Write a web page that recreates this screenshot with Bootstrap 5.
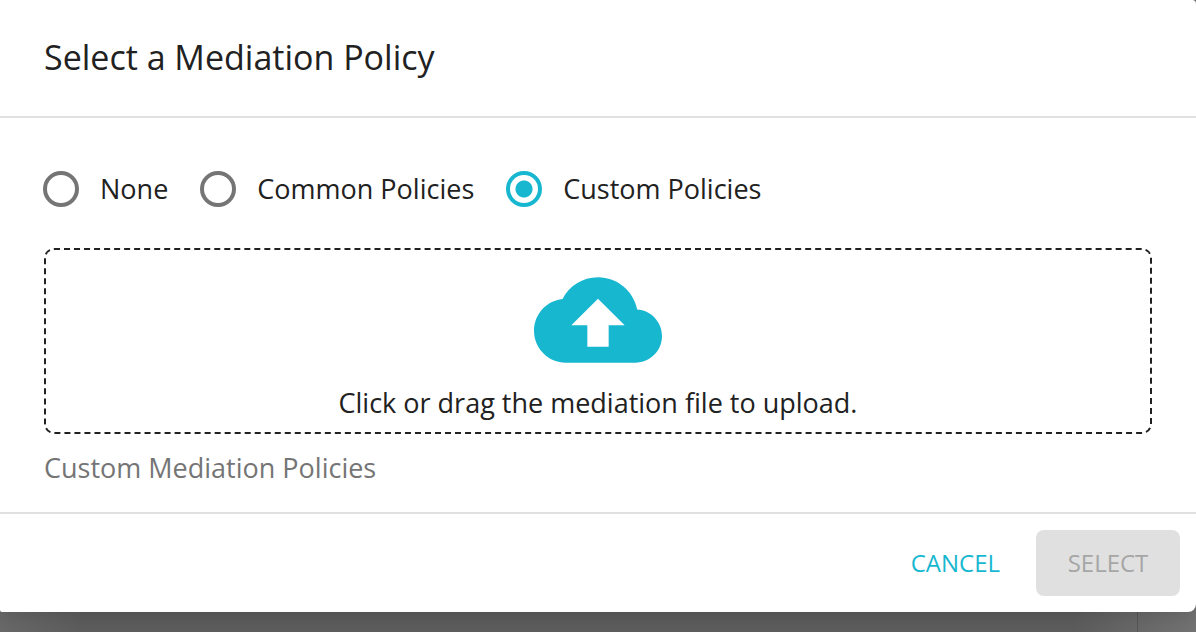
<!DOCTYPE html>
<html lang="en">
<head>
<meta charset="utf-8">
<meta name="viewport" content="width=device-width, initial-scale=1">
<title>Select a Mediation Policy</title>
<link href="https://cdn.jsdelivr.net/npm/bootstrap@5.3.0/dist/css/bootstrap.min.css" rel="stylesheet">
<style>
  :root { --accent: #18b7d0; --ink: #212121; --rule: #e0e0e0; }
  body {
    font-family: "Open Sans", sans-serif;
    font-size: 27px;
    line-height: 40px;
    color: var(--ink);
    background:
      linear-gradient(#555, #555) calc(100% - 58px) 0 / 1px 100% no-repeat,
      linear-gradient(90deg, #686868 0, #5c5c5c 80px, #5c5c5c calc(100% - 120px), #727272 100%);
    min-height: 100vh;
  }
  .policy-dialog { background: #fff; border-radius: 0 4px 8px 2px; box-shadow: 0 4px 16px rgba(0, 0, 0, .12); }
  .policy-header { padding: 33px 44px 35px; border-bottom: 2px solid var(--rule); }
  .policy-title { font-size: 34px; line-height: 48px; font-weight: 400; }
  .policy-main { padding: 51px 44px 24px; }
  .policy-options { gap: 33px; margin-bottom: 39px; }
  .policy-option { gap: 21px; }
  .policy-option .form-check-input {
    width: 36px; height: 36px; margin: 0 0 0 -1px;
    border: 4px solid #757575; background-color: #fff; box-shadow: none;
  }
  .policy-option .form-check-input:checked {
    border-color: var(--accent);
    background-image: radial-gradient(circle, var(--accent) 8px, transparent 9px);
    background-size: auto;
  }
  .drop-zone { border: 2px dashed var(--ink); border-radius: 10px; padding: 6px 16px 10px; line-height: 38px; cursor: pointer; }
  .drop-zone svg { width: 128px; height: 128px; fill: var(--accent); }
  .policy-caption { color: #757575; margin-top: 14px; }
  .policy-footer { border-top: 2px solid var(--rule); padding: 16px; gap: 8px; }
  .policy-footer .btn { font-size: 24px; line-height: 42px; padding: 12px 28px; border: 0; border-radius: 8px; }
  .btn-cancel, .btn-cancel:hover { color: var(--accent); }
  .policy-footer .btn-select:disabled { min-width: 144px; background: var(--rule); color: #a6a6a6; opacity: 1; }
</style>
</head>
<body>
<main class="policy-dialog" role="dialog" aria-labelledby="dialogTitle">
  <header class="policy-header">
    <h1 class="policy-title m-0" id="dialogTitle">Select a Mediation Policy</h1>
  </header>
  <section class="policy-main">
    <div class="policy-options d-flex flex-wrap" role="radiogroup" aria-labelledby="dialogTitle">
      <div class="policy-option d-flex align-items-center">
        <input class="form-check-input" type="radio" name="policy" id="none">
        <label for="none">None</label>
      </div>
      <div class="policy-option d-flex align-items-center">
        <input class="form-check-input" type="radio" name="policy" id="common">
        <label for="common">Common Policies</label>
      </div>
      <div class="policy-option d-flex align-items-center">
        <input class="form-check-input" type="radio" name="policy" id="custom" checked>
        <label for="custom">Custom Policies</label>
      </div>
    </div>
    <label class="drop-zone d-flex flex-column align-items-center text-center" for="policyFile">
      <svg viewBox="0 0 24 24" aria-hidden="true"><path d="M19.35 10.04C18.67 6.59 15.64 4 12 4 9.11 4 6.6 5.64 5.35 8.04 2.34 8.36 0 10.91 0 14c0 3.31 2.69 6 6 6h13c2.76 0 5-2.24 5-5 0-2.64-2.05-4.78-4.65-4.96zM14 13v4h-4v-4H7l5-5 5 5h-3z"/></svg>
      <span>Click or drag the mediation file to upload.</span>
    </label>
    <input class="visually-hidden" type="file" id="policyFile">
    <p class="policy-caption mb-0">Custom Mediation Policies</p>
  </section>
  <footer class="policy-footer d-flex justify-content-end">
    <button type="button" class="btn btn-cancel">CANCEL</button>
    <button type="button" class="btn btn-select" disabled>SELECT</button>
  </footer>
</main>
<script src="https://cdn.jsdelivr.net/npm/bootstrap@5.3.0/dist/js/bootstrap.bundle.min.js"></script>
</body>
</html>
